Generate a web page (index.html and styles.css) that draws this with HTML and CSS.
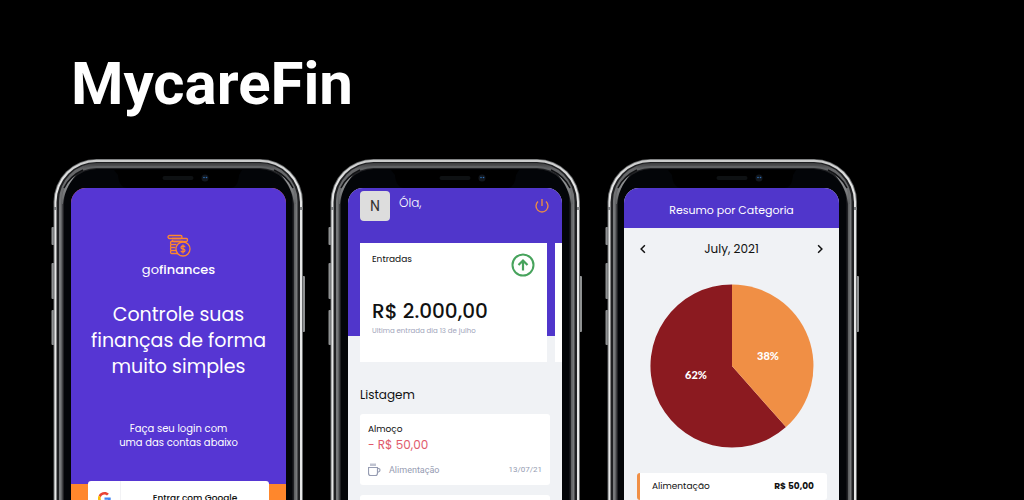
FILE: index.html
```
<!DOCTYPE html>
<html lang="pt-BR">
<head>
<meta charset="utf-8">
<meta name="viewport" content="width=device-width, initial-scale=1">
<title>MycareFin</title>
<link rel="stylesheet" href="styles.css">
</head>
<body>
<svg class="sprite" aria-hidden="true">
  <defs>
    <linearGradient id="steel" x1="0" y1="0" x2="0" y2="1">
      <stop offset="0" stop-color="#c9caca"/><stop offset=".04" stop-color="#e4e5e5"/><stop offset="1" stop-color="#e9eaea"/>
    </linearGradient>
    <linearGradient id="band" x1="0" y1="0" x2="0" y2="1">
      <stop offset="0" stop-color="#3c3d3f"/><stop offset=".012" stop-color="#646567"/><stop offset=".1" stop-color="#77797b"/><stop offset="1" stop-color="#77797b"/>
    </linearGradient>
    <linearGradient id="glint" x1="0" y1="0" x2="0" y2="1">
      <stop offset="0" stop-color="#a0a2a4"/><stop offset="1" stop-color="#606264"/>
    </linearGradient>
    <symbol id="frame" viewBox="0 0 257 342">
      <g fill="#8f9192">
        <rect x="1.500" y="69" width="3" height="18" rx="1"/>
        <rect x="1.500" y="105" width="3" height="36" rx="1"/>
        <rect x="1.500" y="152" width="3" height="35" rx="1"/>
        <rect x="252" y="118" width="3" height="56" rx="1"/>
      </g>
      <rect x="3.500" y="1" width="249.500" height="500" rx="43" fill="#696b6c"/>
      <rect x="4.500" y="1.700" width="247.500" height="500" rx="42" fill="url(#steel)"/>
      <rect x="6.500" y="4" width="243.500" height="500" rx="40" fill="#202123"/>
      <rect x="9" y="5" width="238.500" height="500" rx="38" fill="url(#band)"/>
      <rect x="11" y="8" width="234.500" height="500" rx="36" fill="#606264"/>
      <rect x="12.500" y="10" width="231.500" height="500" rx="34" fill="#202124"/>
      <rect x="14" y="11" width="228.500" height="500" rx="33" fill="#030508"/>
      <path d="M11 46C12 32 17 23 26 17C18 26 14 36 13 46ZM246 46C245 32 240 23 231 17C239 26 243 36 244 46Z" fill="url(#glint)"/>
      <path d="M14 30Q20 18 33 12M243 30Q237 18 224 12" fill="none" stroke="#111214" stroke-width="1.500"/>
      <path d="M7 49H4V52H7ZM250 49H253V52H250Z" fill="#808284"/>
      <path d="M64 12H192L189 17Q188 30 180 30H78Q69 30 68 17Z" fill="#000"/>
      <rect x="112.500" y="18" width="31" height="4" rx="2" fill="#0e1113"/>
      <circle cx="155" cy="20" r="3.500" fill="#11161d"/>
      <circle cx="154" cy="19.500" r=".8" fill="#2f6eb5"/><circle cx="156.500" cy="19.500" r=".8" fill="#2f6eb5"/>
    </symbol>
  </defs>
</svg>

<h1 class="title">MycareFin</h1>

<main class="phones">
  <section class="phone">
    <svg class="frame" aria-hidden="true"><use href="#frame"/></svg>
    <div class="screen login">
      <div class="login-top">
        <svg class="coins" viewBox="0 0 24 24" aria-hidden="true">
          <g fill="none" stroke="#ff872c" stroke-width="1.300" stroke-linejoin="round">
            <rect x="1" y="1.500" width="14" height="3" rx="1.500"/>
            <path d="M5 4.500H19.500Q20.500 4.500 20.500 6T19.500 7.500H7Q5.500 7.500 5 6"/>
            <path d="M9 7.500H4.500Q3.500 7.500 3.500 9T4.500 10.500H9.500M4.500 10.500Q3.500 10.500 3.500 12T4.500 13.500H8.500M4.500 13.500Q3.500 13.500 3.500 15T4.500 16.500H9M4.500 16.500Q3.500 16.500 3.500 18T4.500 19.500H11M8 7.500H16"/>
            <circle cx="16" cy="15" r="7"/>
            <path d="M18 13.200Q18 12 16 12T14 13.400T16 15T18 16.600T16 18T14 16.800M16 10.500V19.500"/>
          </g>
        </svg>
        <p class="brand">go<b>finances</b></p>
        <h2 class="headline">Controle suas<br>finanças de forma<br>muito simples</h2>
        <p class="hint">Faça seu login com<br>uma das contas abaixo</p>
      </div>
      <div class="login-foot">
        <button class="google" type="button">
          <span class="google-icon">
            <svg viewBox="0 0 48 48" aria-hidden="true">
              <path fill="#ea4335" d="M24 9.500c3.500 0 6.700 1.200 9.200 3.600l6.900-6.900C35.900 2.400 30.500 0 24 0 14.600 0 6.500 5.400 2.600 13.200l8 6.200C12.400 13.700 17.700 9.500 24 9.500z"/>
              <path fill="#4285f4" d="M47 24.500c0-1.600-.2-3.100-.4-4.500H24v9h12.900c-.6 3-2.200 5.500-4.700 7.200l7.700 6C44.400 38 47 31.800 47 24.500z"/>
              <path fill="#fbbc05" d="M10.500 28.600a14 14 0 0 1 0-9.200l-8-6.200a24 24 0 0 0 0 21.600z"/>
              <path fill="#34a853" d="M24 48c6.500 0 11.900-2.100 15.900-5.800l-7.700-6c-2.200 1.400-4.900 2.300-8.200 2.300-6.300 0-11.600-4.200-13.500-9.900l-8 6.200C6.500 42.600 14.600 48 24 48z"/>
            </svg>
          </span>
          <span class="google-text">Entrar com Google</span>
        </button>
      </div>
    </div>
  </section>

  <section class="phone">
    <svg class="frame" aria-hidden="true"><use href="#frame"/></svg>
    <div class="screen dashboard">
      <header class="user">
        <span class="avatar">N</span>
        <p class="hello">Óla,</p>
        <button class="power" type="button" aria-label="Sair">
          <svg viewBox="0 0 16 16" aria-hidden="true"><path d="M8 1V8M4 3.500A6 6 0 1 0 12 3.500" fill="none" stroke="#e88b46" stroke-width="1.400"/></svg>
        </button>
      </header>
      <div class="cards">
        <article class="card">
          <div class="card-head">
            <h3>Entradas</h3>
            <svg viewBox="0 0 24 24" aria-hidden="true"><g fill="none" stroke="#47a35c" stroke-width="2"><circle cx="12" cy="12" r="10.500"/><path d="M12 17.500V8M7.500 12L12 7.500L16.500 12" stroke-width="2.200"/></g></svg>
          </div>
          <p class="amount">R$ 2.000,00</p>
          <p class="last">Ultima entrada dia 13 de julho</p>
        </article>
        <article class="card"></article>
      </div>
      <div class="list">
        <h3 class="list-title">Listagem</h3>
        <article class="item">
          <h4>Almoço</h4>
          <p class="expense">- R$ 50,00</p>
          <div class="meta">
            <svg viewBox="0 0 14 14" aria-hidden="true"><path d="M.5 4.500H9.500V10Q9.500 12.500 7.500 12.500H2.500Q.5 12.500 .5 10ZM9.500 5.500H10.500Q12 5.500 12 7T10.500 9H9.500M3 .5V3M5 .5V3M7 .5V3" fill="none" stroke="#969cb2" stroke-width="1.200"/></svg>
            <span>Alimentação</span><time datetime="2021-07-13">13/07/21</time>
          </div>
        </article>
        <article class="item"></article>
      </div>
    </div>
  </section>

  <section class="phone">
    <svg class="frame" aria-hidden="true"><use href="#frame"/></svg>
    <div class="screen summary">
      <h2 class="bar">Resumo por Categoria</h2>
      <div class="month">
        <button type="button" aria-label="Mês anterior"><svg viewBox="0 0 8 8" aria-hidden="true"><path d="M5.500 1L2.500 4L5.500 7" fill="none" stroke="#111" stroke-width="1.200"/></svg></button>
        <span>July, 2021</span>
        <button type="button" aria-label="Próximo mês"><svg viewBox="0 0 8 8" aria-hidden="true"><path d="M2.500 1L5.500 4L2.500 7" fill="none" stroke="#111" stroke-width="1.200"/></svg></button>
      </div>
      <svg class="pie" viewBox="0 0 164 164" role="img" aria-label="62% e 38%">
        <path d="M82 82L136 143A81.500 81.500 0 1 1 82 .5Z" fill="#8b1a20"/>
        <path d="M82 82V.5A81.500 81.500 0 0 1 136 143Z" fill="#f08f45"/>
        <text x="118" y="76">38%</text><text x="46" y="95">62%</text>
      </svg>
      <div class="category"><span>Alimentação</span><strong>R$ 50,00</strong></div>
    </div>
  </section>
</main>
</body>
</html>
```
FILE: styles.css
```
* { box-sizing: border-box; }
body {
  margin: 0;
  height: 100vh;
  display: flex;
  flex-direction: column;
  overflow: hidden;
  background: #000;
  color: #111;
  font-family: Poppins, Inter, "Open Sans", sans-serif;
}
h1, h2, h3, h4, p { margin: 0; font-weight: 400; }
button { border: 0; padding: 0; background: none; font: inherit; color: inherit; }
svg { display: block; flex: none; }
.sprite { position: absolute; width: 0; height: 0; }

.title {
  padding: 49px 71px 40px;
  color: #fff;
  font: 700 60px/70px Roboto, sans-serif;
}
.phones {
  flex: 1;
  min-height: 0;
  display: flex;
  gap: 28px;
  padding-left: 54px;
}
.phone {
  position: relative;
  flex: none;
  width: 249px;
  padding: 29px 18px 0 17px;
}
.phone:first-child { padding-right: 17px; }
.phone:last-child { padding: 29px 18px 0 16px; }
.frame {
  position: absolute;
  top: -1px;
  left: -4px;
  width: 257px;
  height: 342px;
}
.screen {
  position: relative;
  height: 100%;
  overflow: hidden;
  border-radius: 15px 15px 0 0;
  background: #f0f2f5;
}

.login { background: #ff872c; text-align: center; color: #fff; }
.login-top {
  display: flex;
  flex-direction: column;
  align-items: center;
  height: 296px;
  padding-top: 46px;
  background: #5636d3;
}
.coins { width: 24px; height: 24px; }
.brand { margin-top: 2px; font-size: 13px; line-height: 20px; }
.brand b { font-weight: 500; }
.headline { margin-top: 22px; font-size: 19px; line-height: 26px; font-weight: 400; }
.hint { margin-top: 42px; font-size: 10px; line-height: 14px; }
.login-foot { padding: 0 17px; }
.google {
  display: flex;
  width: 100%;
  height: 34px;
  margin-top: -3px;
  border-radius: 3px;
  background: #fff;
  color: #111;
  font-size: 9px;
  font-weight: 500;
}
.google-icon {
  display: grid;
  place-items: center;
  width: 33px;
  height: 34px;
  border-right: 1px solid #f2f2f5;
}
.google-icon svg { width: 13px; height: 13px; }
.google-text { flex: 1; align-self: center; }

.user {
  display: flex;
  align-items: flex-start;
  height: 148px;
  padding: 3px 12px;
  background: #5036cb;
  color: #fff;
}
.avatar {
  width: 30px;
  border-radius: 4px;
  background: #ddd;
  color: #333;
  font: 14px/30px Roboto, sans-serif;
  text-align: center;
}
.hello { margin-left: 9px; font-size: 12px; line-height: 24px; font-weight: 300; }
.power { margin: 7px 0 0 auto; }
.power svg { width: 16px; height: 16px; }
.cards { display: flex; gap: 8px; margin: -93px 0 0 12px; }
.card { flex: none; width: 187px; height: 119px; padding: 10px 12px; background: #fff; }
.card-head { display: flex; justify-content: space-between; height: 46px; }
.card-head h3 { font-size: 9px; line-height: 12px; }
.card-head svg { width: 24px; height: 24px; }
.amount { font-size: 20px; line-height: 24px; font-weight: 500; }
.last { margin-top: 2px; font-size: 7px; line-height: 12px; color: #a0a4ba; }
.list { padding: 24px 12px 0; }
.list-title { font-size: 12px; line-height: 18px; }
.item {
  height: 71px;
  margin: 10px 0 9px;
  padding: 8px;
  border-radius: 3px;
  background: #fff;
}
.item h4 { font-size: 9px; line-height: 14px; }
.expense { font-size: 12px; line-height: 18px; color: #e0596b; }
.meta { display: flex; align-items: center; margin-top: 9px; font: 9px/14px Roboto, sans-serif; color: #969cb2; }
.meta svg { width: 14px; height: 14px; margin-right: 7px; }
.meta time { margin-left: auto; font-size: 8px; }

.bar { padding: 12px 0 8px; background: #5036cb; color: #fff; font-size: 11px; line-height: 20px; text-align: center; }
.month { display: flex; justify-content: space-between; padding: 11px 14px 0; font-size: 12px; line-height: 20px; }
.month svg { width: 10px; height: 10px; }
.pie { width: 164px; height: 164px; margin: 25px auto 0; }
.pie text { fill: #fff; font: 900 11px Lato, sans-serif; text-anchor: middle; }
.category {
  display: flex;
  justify-content: space-between;
  margin: 25px 12px 0 13px;
  padding: 4px 13px 4px 12px;
  border-left: 3px solid #f08f45;
  border-radius: 3px;
  background: #fff;
  font-size: 9px;
  line-height: 19px;
}
```
